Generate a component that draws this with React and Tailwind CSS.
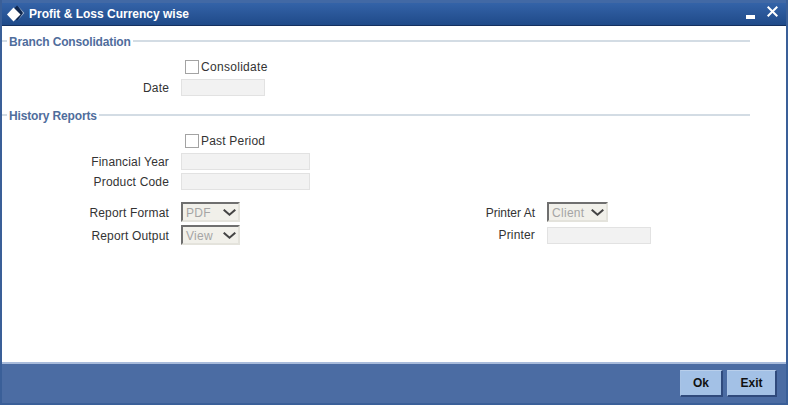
import React from "react";

function Legend({ title, className = "" }) {
  return (
    <div className={"flex h-4 items-center mr-[36px] " + className}>
      <div className="h-[2px] w-[5px] bg-[#d3dce4]" />
      <span className="px-[2px] pt-[2px] text-[12px] font-bold leading-4 tracking-[-0.15px] text-[#4f6d9c]">{title}</span>
      <div className="h-[2px] flex-1 bg-[#d3dce4]" />
    </div>
  );
}

function Check({ label, className = "", tracking = "tracking-[0.3px]" }) {
  return (
    <div className={"flex h-[14px] items-center pl-[183px] " + className}>
      <div className="h-[14px] w-[14px] border border-[#a3a3a3] bg-white" />
      <span className={tracking + " ml-[2px] text-[12px] text-[#333333]"}>{label}</span>
    </div>
  );
}

function Label({ children, tracking = "tracking-[0.17px]", offset = "" }) {
  return <div className={tracking + " " + offset + " mr-[12px] w-[167px] shrink-0 text-right text-[12px] text-[#333333]"}>{children}</div>;
}

function Input({ w }) {
  return <div className={w + " h-[17px] border border-[#e2e2e2] bg-[#f2f2f2]"} />;
}

function Sel({ value, w }) {
  return (
    <div className={w + " flex h-[20px] items-center justify-between border-2 border-b-[#e4e3dc] border-l-[#6f6f6f] border-r-[#e4e3dc] border-t-[#6f6f6f] bg-[#f1f0ea] pl-[3px] pr-[2px]"}>
      <span className="pt-[1px] text-[12px] tracking-[0.3px] text-[#a5a5a5]">{value}</span>
      <svg width="13" height="7" viewBox="0 0 13 7" fill="none">
        <path d="M0.7 0.7 L6.5 5.7 L12.3 0.7" stroke="#454545" strokeWidth="2" />
      </svg>
    </div>
  );
}

function Btn({ children, w }) {
  return (
    <button className={w + " h-[27px] border border-b-2 border-r-2 border-b-[#2f4a7c] border-l-[#a9c4e6] border-r-[#2f4a7c] border-t-[#b9cfeb] bg-[#a3c1e6] text-[12px] font-bold text-[#111111]"}>
      {children}
    </button>
  );
}

export default function App() {
  return (
    <div className="flex h-[405px] w-[788px] flex-col border-2 border-t-0 border-[#3a5f98] bg-white font-['Liberation_Sans',Arial,sans-serif]">
      <div className="flex h-[26px] shrink-0 items-center border-b border-[#14305f] border-t-[3px] border-t-[#4269a5] bg-gradient-to-b from-[#3463a8] to-[#1f4a89] pl-[3px] pr-[8px]">
        <svg width="22" height="18" viewBox="0 0 22 18" className="shrink-0">
          <path d="M12 0.5 L19.5 8 L12 15.5 L5 8 Z" fill="#10284f" />
          <path d="M13 1 L19.5 8 L13 15 L18 8 Z" fill="#9fb4d4" />
          <path d="M8.5 2.5 L15.5 9.5 L8.5 16.5 L2 9.5 Z" fill="#ffffff" />
        </svg>
        <span className="ml-[2px] text-[12px] font-bold text-white">Profit &amp; Loss Currency wise</span>
        <div className="ml-auto flex items-start">
          <div className="mr-[12px] mt-[6px] h-[4px] w-[9px] bg-white" />
          <svg width="11" height="11" viewBox="0 0 11 11" className="-mt-[3px]">
            <path d="M0.7 0.7 L10.3 10.3 M10.3 0.7 L0.7 10.3" stroke="#ffffff" strokeWidth="2" />
          </svg>
        </div>
      </div>

      <div className="flex-1 pt-[7px]">
        <Legend title="Branch Consolidation" />
        <Check label="Consolidate" className="mt-[11px]" />
        <div className="mt-[5px] flex h-[17px] items-center">
          <Label>Date</Label>
          <Input w="w-[84px]" />
        </div>

        <Legend title="History Reports" className="mt-[11px]" />
        <Check label="Past Period" tracking="tracking-[0.2px]" className="mt-[11px]" />
        <div className="mt-[5px] flex h-[17px] items-center">
          <Label>Financial Year</Label>
          <Input w="w-[129px]" />
        </div>
        <div className="mt-[3px] flex h-[17px] items-center">
          <Label>Product Code</Label>
          <Input w="w-[129px]" />
        </div>

        <div className="mt-[12px] flex">
          <div className="w-[366px] shrink-0">
            <div className="flex h-[20px] items-center">
              <Label offset="pt-[1px]">Report Format</Label>
              <Sel value="PDF" w="w-[59px]" />
            </div>
            <div className="mt-[3px] flex h-[20px] items-center">
              <Label offset="pt-[1px]">Report Output</Label>
              <Sel value="View" w="w-[59px]" />
            </div>
          </div>
          <div>
            <div className="flex h-[20px] items-center">
              <Label tracking="tracking-normal" offset="pt-[1px]">Printer At</Label>
              <Sel value="Client" w="w-[61px]" />
            </div>
            <div className="mt-[3px] flex h-[20px] items-center">
              <Label>Printer</Label>
              <Input w="w-[104px]" />
            </div>
          </div>
        </div>
      </div>

      <div className="flex h-[41px] shrink-0 items-center justify-end gap-[4px] border-t-2 border-[#a9bcdc] bg-[#4b6ca3] pr-[9px]">
        <Btn w="w-[43px]">Ok</Btn>
        <Btn w="w-[50px]">Exit</Btn>
      </div>
    </div>
  );
}
